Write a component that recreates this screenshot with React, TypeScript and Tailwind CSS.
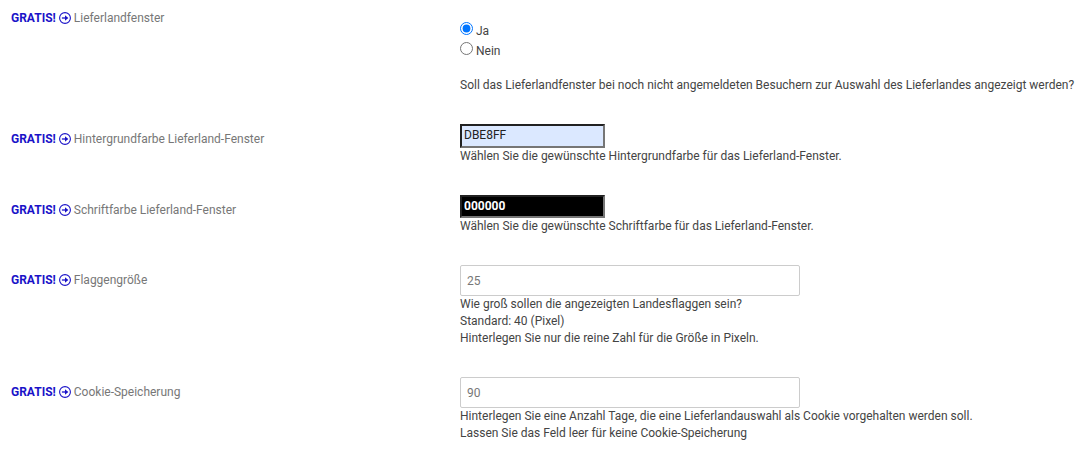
import type { ReactNode } from 'react';

function ArrowCircle() {
  return (
    <svg viewBox="0 0 12 12" className="mx-[3px] inline-block h-3 w-3 align-[-2px]" fill="none" stroke="currentColor" aria-hidden="true">
      <circle cx="6" cy="6" r="5.4" strokeWidth="1.1" />
      <path d="M2.9 6h5" strokeWidth="1.3" />
      <path d="M6 3.3 9.3 6 6 8.7z" fill="currentColor" stroke="none" />
    </svg>
  );
}

function Title({ children }: { children: ReactNode }) {
  return (
    <>
      <span className="font-bold text-[#1a12c8]">
        GRATIS!
        <ArrowCircle />
      </span>
      {children}
    </>
  );
}

type RowProps = {
  id: string;
  title: string;
  help: string[];
  children: ReactNode;
};

function Row({ id, title, help, children }: RowProps) {
  return (
    <div className="flex">
      <label htmlFor={id} className="w-[449px] shrink-0 pt-[7px] text-[#777]">
        <Title>{title}</Title>
      </label>
      <div className="min-w-0 flex-1">
        {children}
        {help.map((line) => (
          <p key={line}>{line}</p>
        ))}
      </div>
    </div>
  );
}

function Choice({ label, checked }: { label: string; checked?: boolean }) {
  return (
    <label className="flex h-5 items-start gap-[3px]">
      <input type="radio" name="window" defaultChecked={checked} className="h-[13px] w-[13px]" />
      <span className="pt-px">{label}</span>
    </label>
  );
}

export default function App() {
  return (
    <form className="flex flex-col gap-[30px] bg-white pt-[9px] pl-[11px] font-['Roboto',sans-serif] text-xs leading-[17px] text-[#444]">
      <div role="radiogroup" aria-labelledby="country-window" className="flex">
        <div id="country-window" className="w-[449px] shrink-0 pt-px text-[#777]">
          <Title>Lieferlandfenster</Title>
        </div>
        <div className="min-w-0 flex-1 pt-[13px]">
          <Choice label="Ja" checked />
          <Choice label="Nein" />
          <p className="pt-[15px]">
            Soll das Lieferlandfenster bei noch nicht angemeldeten Besuchern zur Auswahl des Lieferlandes angezeigt werden?
          </p>
        </div>
      </div>
      <Row id="background" title="Hintergrundfarbe Lieferland-Fenster" help={['Wählen Sie die gewünschte Hintergrundfarbe für das Lieferland-Fenster.']}>
        <input id="background" defaultValue="DBE8FF" className="block h-6 w-[145px] border-2 [border-style:inset] border-[#767676] bg-[#dbe8ff] px-0.5 pb-0.5 text-[#222]" />
      </Row>
      <Row id="color" title="Schriftfarbe Lieferland-Fenster" help={['Wählen Sie die gewünschte Schriftfarbe für das Lieferland-Fenster.']}>
        <input id="color" defaultValue="000000" className="block h-[23px] w-[145px] border-2 [border-style:inset] border-[#767676] bg-black px-0.5 pb-0.5 font-bold text-white" />
      </Row>
      <Row
        id="flag"
        title="Flaggengröße"
        help={['Wie groß sollen die angezeigten Landesflaggen sein?', 'Standard: 40 (Pixel)', 'Hinterlegen Sie nur die reine Zahl für die Größe in Pixeln.']}
      >
        <input id="flag" defaultValue="25" className="block h-[31px] w-[340px] rounded-xs border border-[#ccc] px-1.5 text-[#777]" />
      </Row>
      <Row
        id="cookie"
        title="Cookie-Speicherung"
        help={['Hinterlegen Sie eine Anzahl Tage, die eine Lieferlandauswahl als Cookie vorgehalten werden soll.', 'Lassen Sie das Feld leer für keine Cookie-Speicherung']}
      >
        <input id="cookie" defaultValue="90" className="block h-[31px] w-[340px] rounded-xs border border-[#ccc] px-1.5 text-[#777]" />
      </Row>
    </form>
  );
}
